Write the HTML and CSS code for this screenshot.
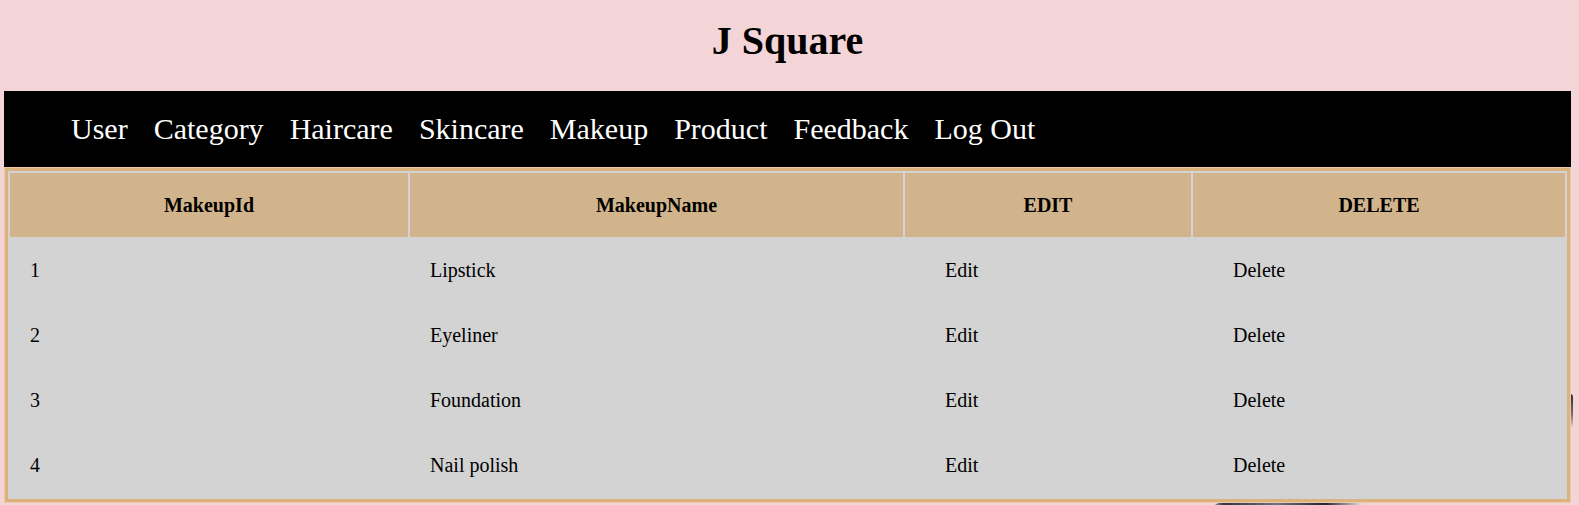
FILE: index.html
```html
<!DOCTYPE html>
<html lang="en">
<head>
<meta charset="utf-8">
<title>J Square</title>
<link rel="stylesheet" href="styles.css">
</head>
<body>
<div class="bg-art" aria-hidden="true">
  <span class="shard shard-bottom"></span>
  <span class="shard shard-right"></span>
</div>
<div class="page">
  <h1 class="title">J Square</h1>
  <nav class="nav">
    <a href="#">User</a>
    <a href="#">Category</a>
    <a href="#">Haircare</a>
    <a href="#">Skincare</a>
    <a href="#">Makeup</a>
    <a href="#">Product</a>
    <a href="#">Feedback</a>
    <a href="#">Log Out</a>
  </nav>
  <table class="grid">
    <colgroup>
      <col class="c1"><col class="c2"><col class="c3"><col class="c4">
    </colgroup>
    <thead>
      <tr><th>MakeupId</th><th>MakeupName</th><th>EDIT</th><th>DELETE</th></tr>
    </thead>
    <tbody>
      <tr><td>1</td><td>Lipstick</td><td><a class="act" href="#">Edit</a></td><td><a class="act" href="#">Delete</a></td></tr>
      <tr><td>2</td><td>Eyeliner</td><td><a class="act" href="#">Edit</a></td><td><a class="act" href="#">Delete</a></td></tr>
      <tr><td>3</td><td>Foundation</td><td><a class="act" href="#">Edit</a></td><td><a class="act" href="#">Delete</a></td></tr>
      <tr><td>4</td><td>Nail polish</td><td><a class="act" href="#">Edit</a></td><td><a class="act" href="#">Delete</a></td></tr>
    </tbody>
  </table>
</div>
</body>
</html>
```
FILE: styles.css
```css
html, body {
  margin: 0;
  padding: 0;
}
body {
  background: #f3d5d7;
  font-family: "Liberation Serif", "Times New Roman", serif;
  color: #000;
  position: relative;
  min-height: 505px;
  overflow: hidden;
}
.bg-art {
  position: absolute;
  inset: 0;
  z-index: 0;
  pointer-events: none;
}
.shard {
  position: absolute;
  display: block;
}
.shard-bottom {
  left: 1205px;
  top: 499px;
  width: 160px;
  height: 8px;
  background: linear-gradient(90deg, #e9dede 0%, #2e3440 12%, #6b7386 45%, #1d2330 75%, #f4eeee 100%);
  clip-path: polygon(4% 100%, 10% 30%, 60% 0, 100% 10%, 96% 100%);
}
.shard-right {
  left: 1568px;
  top: 394px;
  width: 5px;
  height: 34px;
  background: linear-gradient(180deg, #2b3038, #7b6a6a 60%, #f0d2d2);
  border-radius: 0 3px 3px 0;
}
.page {
  margin: 0 8px 0 4px;
  position: relative;
  z-index: 1;
}
.title {
  margin: 0;
  padding-top: 19px;
  height: 72px;
  line-height: 44px;
  font-size: 40px;
  font-weight: bold;
  text-align: center;
}
.nav {
  background: #000;
  height: 76px;
  display: flex;
  align-items: center;
  padding-left: 54px;
}
.nav a {
  color: #fff;
  text-decoration: none;
  font-size: 30px;
  padding: 0 13px;
  line-height: 34px;
}
.grid {
  width: calc(100% - 2px);
  margin: 1px 1px 0;
  border: 3px solid #dcb27f;
  outline: 1px solid #ecc8a6;
  border-spacing: 2px;
  background: #d3d3d3;
  table-layout: fixed;
  font-size: 20px;
}
.c1 { width: 398px; }
.c2 { width: 493px; }
.c3 { width: 286px; }
.c4 { width: 372px; }
.grid th {
  background: #d2b48c;
  height: 64px;
  padding: 0 20px;
  font-weight: bold;
  text-align: center;
}
.grid td {
  height: 63px;
  padding: 0 20px;
  text-align: left;
}
.act {
  color: #000;
  text-decoration: none;
  padding-left: 20px;
}
```
